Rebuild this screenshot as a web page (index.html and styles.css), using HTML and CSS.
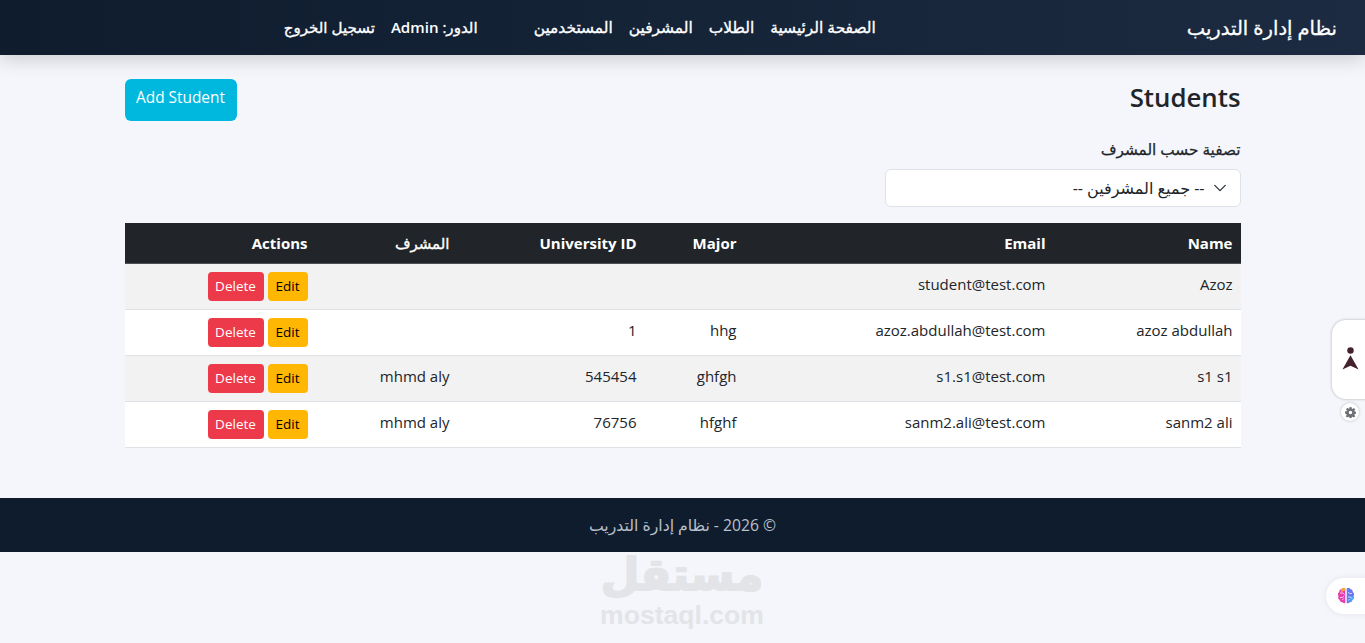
FILE: index.html
```html
<!DOCTYPE html>
<html lang="ar" dir="rtl">
<head>
<meta charset="utf-8">
<title>Students</title>
<link rel="stylesheet" href="styles.css">
</head>
<body>
<nav class="navbar">
  <a class="brand">نظام إدارة التدريب</a>
  <ul class="nav-links">
    <li>الصفحة الرئيسية</li>
    <li>الطلاب</li>
    <li>المشرفين</li>
    <li>المستخدمين</li>
  </ul>
  <div class="nav-user">
    <span>الدور: <b class="role">Admin</b></span>
    <span>تسجيل الخروج</span>
  </div>
</nav>
<main class="container">
  <div class="page-head">
    <h2>Students</h2>
    <button class="btn btn-info">Add Student</button>
  </div>
  <div class="filter">
    <label>تصفية حسب المشرف</label>
    <div class="select">
      <svg class="chev" viewBox="0 0 16 16" width="14" height="14"><path d="M2 5l6 6 6-6" fill="none" stroke="#343a40" stroke-width="1.600" stroke-linecap="round" stroke-linejoin="round"/></svg>
      <span>-- جميع المشرفين --</span>
    </div>
  </div>
  <table>
    <colgroup>
      <col class="c1"><col class="c2"><col class="c3"><col class="c4"><col class="c5"><col class="c6">
    </colgroup>
    <thead>
      <tr><th>Name</th><th>Email</th><th>Major</th><th>University ID</th><th class="th-ar">المشرف</th><th>Actions</th></tr>
    </thead>
    <tbody>
      <tr class="odd"><td>Azoz</td><td>student@test.com</td><td></td><td></td><td></td><td><div class="acts"><button class="btn-sm edit">Edit</button><button class="btn-sm del">Delete</button></div></td></tr>
      <tr><td>azoz abdullah</td><td>azoz.abdullah@test.com</td><td>hhg</td><td>1</td><td></td><td><div class="acts"><button class="btn-sm edit">Edit</button><button class="btn-sm del">Delete</button></div></td></tr>
      <tr class="odd"><td>s1 s1</td><td>s1.s1@test.com</td><td>ghfgh</td><td>545454</td><td>mhmd aly</td><td><div class="acts"><button class="btn-sm edit">Edit</button><button class="btn-sm del">Delete</button></div></td></tr>
      <tr><td>sanm2 ali</td><td>sanm2.ali@test.com</td><td>hfghf</td><td>76756</td><td>mhmd aly</td><td><div class="acts"><button class="btn-sm edit">Edit</button><button class="btn-sm del">Delete</button></div></td></tr>
    </tbody>
  </table>
</main>
<footer class="footer">© 2026 - نظام إدارة التدريب</footer>
<div class="watermark">
  <div class="wm-ar">مستقل</div>
  <div class="wm-en">mostaql.com</div>
</div>
<div class="a11y">
  <svg viewBox="0 0 20 26" width="19" height="25"><circle cx="10" cy="4.500" r="3.400" fill="#43222d"/><path d="M10 9.500L18.500 24.500 10 20.500 1.500 24.500z" fill="#43222d"/></svg>
</div>
<div class="a11y-gear">
  <svg viewBox="0 0 16 16" width="11" height="11"><path fill="#6f6f78" fill-rule="evenodd" d="M6.600 0h2.800l.4 2.200 1.300.6L12.900 1.500l2 2-1.300 1.800.6 1.300 2.200.4v2.800l-2.200.4-.6 1.300 1.300 1.800-2 2-1.800-1.300-1.300.6-.4 2.200H6.600l-.4-2.200-1.300-.6-1.800 1.300-2-2 1.300-1.800-.6-1.300L0 9.400V6.600l2.200-.4.6-1.300L1.500 3.100l2-2 1.800 1.300 1.300-.6zM8 5.500a2.500 2.500 0 100 5 2.500 2.500 0 000-5z"/></svg>
</div>
<div class="brain">
  <svg viewBox="0 0 20 20" width="20" height="20">
    <path d="M9.300 2.500C7.800 1.600 6 2 5.300 3.300 3.800 3.500 3 4.700 3.300 6 1.800 6.800 1.500 8.800 2.500 10 1.700 11.500 2.300 13.300 3.700 14c.2 1.500 1.400 2.400 2.700 2.200.8 1.100 2 1.400 2.900.8z" fill="#e63fb0"/>
    <path d="M5.300 3.300c.7-1.300 2.500-1.700 4-.8v2L5 6z" fill="#f7a43a"/>
    <path d="M10.700 2.500c1.500-.9 3.300-.5 4 .8 1.500.2 2.300 1.400 2 2.700 1.500.8 1.800 2.800.8 4 .8 1.500.2 3.300-1.200 4-.2 1.500-1.400 2.400-2.700 2.200-.8 1.100-2 1.400-2.900.8z" fill="#6a78f2"/>
    <path d="M14 10.500l3.500-.5c.8 1.500.2 3.300-1.200 4-.2 1.500-1.400 2.400-2.700 2.200z" fill="#4aa3f5"/>
    <path d="M4 7h3l1.500 1.500M4 11.500h2.500L8 10M6.500 14l1-1.500M12 6l1.500 1.500H16M12 11h2.500l1.500 1.500M12.500 14.500l1-1.500" fill="none" stroke="#fff" stroke-opacity=".75" stroke-width=".9"/>
  </svg>
</div>
</body>
</html>
```
FILE: styles.css
```css
* { box-sizing: border-box; }
html, body { margin: 0; height: 100%; }
body {
  background: #f4f6fb;
  color: #212529;
  font-family: "Open Sans", "Noto Sans", "DejaVu Sans", sans-serif;
  font-size: 16px;
  line-height: 1.5;
  overflow: hidden;
  position: relative;
}
.navbar {
  height: 55px;
  display: flex;
  align-items: center;
  padding: 0 28px;
  background: linear-gradient(270deg, #1c2b41 0%, #0f1c2e 100%);
  box-shadow: 0 4px 20px rgba(0,0,0,.18);
  color: #fff;
}
.brand { font-size: 19.500px; margin-left: 311px; -webkit-text-stroke: .3px #fff; }
.nav-links { list-style: none; display: flex; gap: 16px; margin: 0; padding: 0; font-size: 15.450px; -webkit-text-stroke: .35px #fff; }
.nav-user { display: flex; gap: 16px; margin-right: 56px; font-size: 15.100px; -webkit-text-stroke: .35px #fff; }
.role { font-weight: 600; -webkit-text-stroke: 0; }
.container { width: 1116px; margin: 0 auto; padding-top: 24px; }
.page-head { display: flex; justify-content: space-between; align-items: center; margin-bottom: 16px; }
h2 { margin: 0 0 6px; font-size: 25.800px; font-weight: 600; line-height: 36px; }
.btn { border: 0; font: inherit; font-size: 15.400px; border-radius: 6px; height: 42px; padding: 0 0 5px; width: 112px; }
.btn-info { background: #00b8de; color: #fff; }
.filter { margin-bottom: 16px; }
.filter label { display: block; margin-bottom: 8px; font-size: 15.300px; line-height: 24px; -webkit-text-stroke: .25px #212529; }
.select {
  width: 356px; height: 38px;
  background: #fff; border: 1px solid #dee2e6; border-radius: 6px;
  display: flex; align-items: center; gap: 8px;
  padding: 0 13px; font-size: 16px;
}
table { width: 1116px; table-layout: fixed; border-collapse: collapse; font-size: 15px; }
.c1 { width: 187px; } .c2 { width: 309px; } .c3 { width: 100px; }
.c4 { width: 187px; } .c5 { width: 142px; } .c6 { width: 191px; }
th { background: #212529; color: #fff; text-align: right; padding: 8px; height: 40px; font-weight: 700; border-bottom: 1px solid #4d5154; font-size: 15px; }
.th-ar { font-weight: 400; -webkit-text-stroke: .35px #fff; }
td { padding: 8px; height: 46px; line-height: 24px; border-bottom: 1px solid #dee2e6; background: #fff; vertical-align: top; }
.odd td { background: #f2f2f2; }
.acts { display: flex; gap: 4px; }
.btn-sm { border: 0; font: inherit; font-size: 13.500px; height: 29px; border-radius: 4px; line-height: 1; padding: 2px 0 0; }
.edit { width: 40px; background: #ffb703; color: #000; }
.del { width: 56px; background: #ec3a4a; color: #fff; }
.footer { margin-top: 50px; height: 54px; background: #0f1c2e; color: #b9c0ca; text-align: center; line-height: 54px; font-size: 15.700px; }
.watermark { position: absolute; left: 597px; top: 550px; width: 170px; text-align: center; color: #e3e4e7; font-weight: 700; }
.wm-ar { font-family: "Liberation Sans", "DejaVu Sans", sans-serif; font-size: 44.500px; line-height: 50px; height: 51px; -webkit-text-stroke: 2px #e3e4e7; }
.wm-en { font-family: "Liberation Sans", sans-serif; font-size: 26.600px; line-height: 28px; direction: ltr; }
.a11y { position: absolute; left: 1332px; top: 320px; width: 50px; height: 79px; background: #fff; border-radius: 14px 0 0 14px; box-shadow: 0 0 3px rgba(0,0,0,.3); display: flex; align-items: center; justify-content: flex-end; padding: 0 0 3px 9px; }
.a11y-gear { position: absolute; left: 1341px; top: 403px; width: 18px; height: 18px; border-radius: 50%; background: #fff; box-shadow: 0 0 3px rgba(0,0,0,.25); display: flex; align-items: center; justify-content: center; }
.brain { position: absolute; left: 1326px; top: 578px; width: 50px; height: 36px; background: #fff; border-radius: 18px 0 0 18px; box-shadow: 0 0 6px rgba(0,0,0,.08); display: flex; align-items: center; justify-content: flex-end; padding-left: 10px; }
```
